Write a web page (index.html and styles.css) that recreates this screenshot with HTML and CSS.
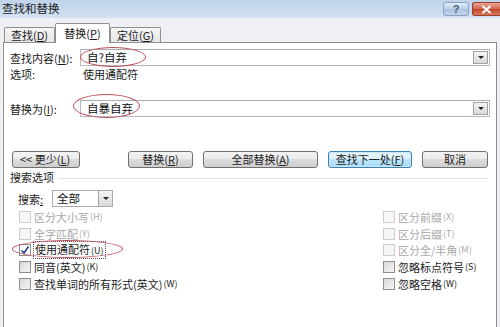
FILE: index.html
```html
<!DOCTYPE html>
<html lang="zh-CN">
<head>
<meta charset="utf-8">
<title>查找和替换</title>
<link rel="stylesheet" href="styles.css">
</head>
<body>
<div class="dialog">
  <div class="titlebar">
    <span class="title">查找和替换</span>
    <div class="title-buttons">
      <span class="tbtn help">?</span>
      <span class="tbtn close">
        <svg width="11" height="9" viewBox="0 0 11 9"><path d="M1.5 1 L9.5 8 M9.5 1 L1.5 8" stroke="#fff" stroke-width="2.2"/></svg>
      </span>
    </div>
  </div>
  <div class="tabs">
    <span class="tab">查找(<u>D</u>)</span>
    <span class="tab active">替换(<u>P</u>)</span>
    <span class="tab">定位(<u>G</u>)</span>
  </div>
  <div class="panel">
    <div class="field-row find-row">
      <span class="label">查找内容(<u>N</u>):</span>
      <div class="combo wide"><span class="combo-text">自?自弃</span><span class="drop"><i></i></span></div>
    </div>
    <div class="opt-row">
      <span class="label">选项:</span>
      <span class="opt-val">使用通配符</span>
    </div>
    <div class="field-row replace-row">
      <span class="label">替换为(<u>I</u>):</span>
      <div class="combo wide"><span class="combo-text">自暴自弃</span><span class="drop"><i></i></span></div>
    </div>
    <div class="btn-row">
      <span class="btn less">&lt;&lt; 更少(<u>L</u>)</span>
      <span class="btn replace">替换(<u>R</u>)</span>
      <span class="btn all">全部替换(<u>A</u>)</span>
      <span class="btn next">查找下一处(<u>F</u>)</span>
      <span class="btn cancel">取消</span>
    </div>
    <div class="group-head"><span>搜索选项</span><i class="rule"></i></div>
    <div class="search-row">
      <span class="search-label">搜索<u>:</u></span>
      <div class="combo small"><span class="combo-text">全部</span><span class="drop"><i></i></span></div>
    </div>
    <div class="checks">
      <div class="col">
        <label class="chk disabled"><span class="box"></span>区分大小写<small>(H)</small></label>
        <label class="chk disabled"><span class="box"></span>全字匹配<small>(Y)</small></label>
        <label class="chk"><span class="box checked"><svg width="10" height="10" viewBox="0 0 10 10"><path d="M1.5 5.5 L4 8 L8.5 1.5" fill="none" stroke="#1b3f8c" stroke-width="1.6"/></svg></span><span class="focus">使用通配符<small>(U)</small></span></label>
        <label class="chk"><span class="box"></span>同音(英文)<small>(K)</small></label>
        <label class="chk"><span class="box"></span>查找单词的所有形式(英文)<small>(W)</small></label>
      </div>
      <div class="col right">
        <label class="chk disabled"><span class="box"></span>区分前缀<small>(X)</small></label>
        <label class="chk disabled"><span class="box"></span>区分后缀<small>(T)</small></label>
        <label class="chk disabled"><span class="box"></span>区分全/半角<small>(M)</small></label>
        <label class="chk"><span class="box"></span>忽略标点符号<small>(S)</small></label>
        <label class="chk"><span class="box"></span>忽略空格<small>(W)</small></label>
      </div>
    </div>
  </div>
  <span class="mark m1"></span>
  <span class="mark m2"></span>
  <span class="mark m3"></span>
</div>
</body>
</html>
```

FILE: styles.css
```css
* { box-sizing: border-box; }
html, body { margin: 0; padding: 0; }
body {
  width: 500px;
  height: 327px;
  overflow: hidden;
  font-family: "Noto Sans CJK SC", "Liberation Sans", sans-serif;
  font-size: 11px;
  color: #1a1a1a;
  background: #eef0f4;
}
u { text-decoration: underline; text-underline-offset: 1px; }
small { font-size: 9px; margin-left: 1px; }

.dialog {
  position: relative;
  width: 500px;
  height: 327px;
  display: flex;
  flex-direction: column;
}

.titlebar {
  height: 18px;
  display: flex;
  align-items: flex-start;
  padding-left: 2px;
  background: linear-gradient(#bfd3ea, #d3e1f2);
}
.title { font-size: 11.5px; line-height: 17px; color: #222; }
.title-buttons { margin-left: auto; display: flex; gap: 3px; padding-top: 2px; }
.tbtn {
  height: 14px;
  border-radius: 3px;
  display: flex;
  align-items: center;
  justify-content: center;
}
.help {
  width: 26px;
  border: 1px solid #8aa0bd;
  background: linear-gradient(#e4edf8, #b9cde6 50%, #a9c0df 51%, #c3d5ec);
  color: #4a5d78;
  font-family: "Liberation Sans", sans-serif;
  font-size: 11px;
  font-weight: bold;
  line-height: 12px;
}
.close {
  width: 28px;
  border: 1px solid #9d3d2e;
  border-right: none;
  border-radius: 3px 0 0 3px;
  background: linear-gradient(#e9a592, #d2654c 50%, #c1452c 51%, #d67a5e);
}

.tabs {
  height: 24px;
  display: flex;
  align-items: flex-end;
  padding-left: 4px;
}
.tab {
  width: 51px;
  height: 15px;
  border: 1px solid #8e8f8f;
  border-bottom: none;
  border-radius: 2px 2px 0 0;
  background: linear-gradient(#f6f6f6, #e6e6e6);
  font-size: 11px;
  line-height: 14px;
  text-align: center;
  margin-bottom: 0;
}
.tab.active {
  width: 55px;
  height: 20px;
  background: #fff;
  margin-bottom: -1px;
  position: relative;
  z-index: 1;
  line-height: 18px;
}

.panel {
  flex: 1;
  margin: 0 3px 0 3px;
  border: 1px solid #8e8f8f;
  border-bottom: none;
  background: #fff;
  padding: 6px 6px 0 6px;
  display: flex;
  flex-direction: column;
}

.field-row { display: flex; align-items: center; height: 17px; }
.label { width: 70px; flex: none; }
.combo {
  height: 17px;
  border: 1px solid #b5b9c0;
  border-top-color: #a9adb4;
  display: flex;
  align-items: center;
  background: #fff;
}
.combo.wide { flex: 1; margin-left: 0; }
.combo-text { padding-left: 6px; font-size: 11.5px; line-height: 15px; color: #111; }
.drop {
  margin-left: auto;
  margin-right: 1px;
  width: 15px;
  height: 13px;
  border: 1px solid #9da2a9;
  background: linear-gradient(#f4f4f4, #d9d9d9);
  display: flex;
  align-items: center;
  justify-content: center;
}
.drop i {
  width: 0; height: 0;
  border-left: 3px solid transparent;
  border-right: 3px solid transparent;
  border-top: 3px solid #222;
}

.opt-row { display: flex; height: 14px; line-height: 14px; margin-top: 1px; }
.opt-row .label { width: 73px; }
.replace-row { margin-top: 19px; }

.btn-row { display: flex; margin-top: 34px; height: 17px; }
.btn {
  height: 17px;
  border: 1px solid #707070;
  border-radius: 3px;
  background: linear-gradient(#f3f3f3, #ebebeb 45%, #dcdcdc 50%, #cfcfcf);
  text-align: center;
  line-height: 15px;
  font-size: 11px;
  color: #222;
}
.btn.less { width: 68px; margin-left: 2px; text-align: left; padding-left: 7px; }
.btn.replace { width: 65px; margin-left: 48px; }
.btn.all { width: 115px; margin-left: 10px; }
.btn.next {
  width: 84px;
  margin-left: 10px;
  border-color: #3c7fb1;
  background: linear-gradient(#eaf6fd, #d9f0fc 45%, #bee6fd 50%, #a7d9f5);
  box-shadow: inset 0 0 0 1px #cbe7f8;
}
.btn.cancel { width: 66px; margin-left: 10px; }

.group-head {
  display: flex;
  align-items: center;
  height: 14px;
  margin-top: 2px;
  line-height: 14px;
}
.group-head .rule {
  flex: 1;
  height: 0;
  border-top: 1px solid #e3e3e3;
  margin: 2px 2px 0 4px;
}

.search-row { display: flex; align-items: center; margin-top: 6px; height: 17px; padding-left: 8px; }
.search-label { width: 34px; }
.combo.small { width: 61px; border-color: #a8acb2; }
.combo.small .combo-text { padding-left: 4px; }
.combo.small .drop { width: 14px; height: 15px; margin-right: 0; border: none; border-left: 1px solid #9da2a9; }

.checks { display: flex; margin-top: 2px; padding-left: 9px; }
.col { display: flex; flex-direction: column; width: 364px; }
.col.right { width: auto; }
.chk {
  height: 16.6px;
  display: flex;
  align-items: center;
  line-height: 14px;
  color: #1a1a1a;
}
.chk.disabled { color: #a8a8a8; }
.box {
  width: 12px;
  height: 12px;
  margin-right: 3px;
  border: 1px solid #8f8f8f;
  background: linear-gradient(135deg, #d8d8d8, #f6f6f6);
  display: flex;
  align-items: center;
  justify-content: center;
  flex: none;
}
.chk.disabled .box { border-color: #cdcdcd; background: #f6f6f6; }
.box.checked { background: #fff; border-color: #8f8f8f; }
.focus { outline: 1px dotted #555; outline-offset: 0; padding: 0 1px; }

.mark {
  position: absolute;
  border: 1.5px solid #c0505a;
  border-radius: 50%;
  pointer-events: none;
  z-index: 5;
}
.m1 { left: 80px; top: 47px; width: 66px; height: 20px; }
.m2 { left: 73px; top: 94px; width: 67px; height: 24px; }
.m3 { left: 12px; top: 240px; width: 111px; height: 18px; }
```
